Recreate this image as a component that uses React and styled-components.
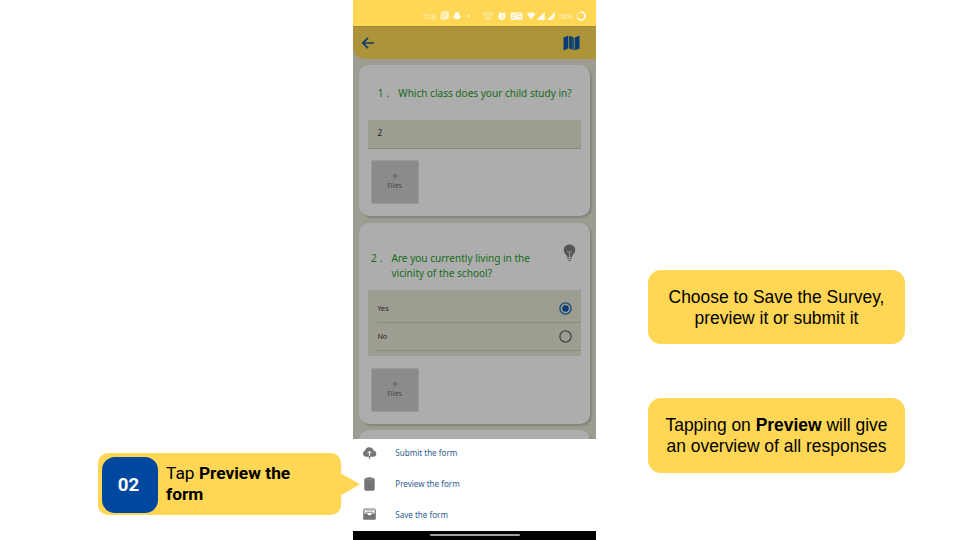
import React from "react";
import styled, { createGlobalStyle } from "styled-components";

const GlobalStyle = createGlobalStyle`
  * { box-sizing: border-box; }
  body { margin: 0; background: #fff; overflow: hidden; }
`;

const Page = styled.main`
  display: grid;
  grid-template-columns: 353px 243px 364px;
  width: 960px;
  height: 540px;
  background: #fff;
`;

const StepColumn = styled.section`
  display: flex;
  flex-direction: column;
  justify-content: flex-end;
  padding: 0 12px 25px 98px;
`;

const StepCallout = styled.div`
  position: relative;
  display: flex;
  align-items: center;
  gap: 8px;
  height: 62px;
  padding: 1px 4px 0;
  border-radius: 10px;
  background: #ffd755;
  font-family: Roboto, sans-serif;
`;

const StepNumber = styled.div`
  display: flex;
  align-items: center;
  justify-content: center;
  flex: none;
  width: 56px;
  height: 56px;
  padding: 1px 3px 0 0;
  border-radius: 13px;
  background: #00489f;
  color: #fff;
  font-size: 18.7px;
  font-weight: 700;
`;

const StepText = styled.div`
  display: flex;
  flex-direction: column;
  padding-bottom: 2px;
  color: #000;
  font-size: 17.35px;
  line-height: 21px;
  white-space: nowrap;
`;

const Pointer = styled.svg`
  position: absolute;
  z-index: 2;
  left: 242px;
  top: 20px;
  width: 20px;
  height: 23px;
`;

const Phone = styled.section`
  display: flex;
  flex-direction: column;
  height: 540px;
  overflow: hidden;
  background: #9d9d92;
  font-family: "Noto Sans", sans-serif;
`;

const StatusBar = styled.div`
  display: flex;
  align-items: center;
  flex: none;
  height: 26px;
  padding: 6px 10px 0 70px;
  background: #ffd755;
  color: #fff3c8;
  font-size: 7.5px;
  line-height: 10px;
`;

const StatusTime = styled.span`
  width: 17px;
  letter-spacing: -0.5px;
  white-space: nowrap;
`;

const StatusIcons = styled.svg`
  flex: none;
  width: 119px;
  height: 12px;
`;

const Battery = styled.span`
  width: 17px;
  letter-spacing: -0.3px;
  white-space: nowrap;
`;

const BatteryRing = styled.svg`
  width: 10px;
  height: 10px;
`;

const AppBar = styled.header`
  display: flex;
  align-items: center;
  justify-content: space-between;
  flex: none;
  height: 33px;
  padding: 0 16px 0 8px;
  border-top: 1px solid #9f8836;
  border-bottom-left-radius: 12px;
  background: #ad9439;
`;

const Icon = styled.svg`
  display: block;
  flex: none;
  width: ${(p) => p.$w}px;
  height: ${(p) => p.$h}px;
`;

const Cards = styled.div`
  display: flex;
  flex-direction: column;
  gap: 6.5px;
  flex: 1;
  min-height: 0;
  overflow: hidden;
  padding: 6px 6px 0 6px;
`;

const Card = styled.article`
  flex: none;
  height: ${(p) => p.$height}px;
  padding: ${(p) => p.$top}px 9px 0;
  border-radius: 10px;
  background: #adadad;
  box-shadow: 2px 2px 2px #85857c;
`;

const Question = styled.div`
  display: flex;
  align-items: flex-start;
  padding-left: ${(p) => p.$indent}px;
  color: #146b18;
  font-size: 10.05px;
  line-height: 14.4px;
  white-space: nowrap;
`;

const QuestionNumber = styled.span`
  width: 20.5px;
  word-spacing: 0.5px;
`;

const QuestionText = styled.span`
  flex: 1;
`;

const Hint = styled(Icon)`
  margin: -7px 5px 0 0;
`;

const Field = styled.div`
  height: 29px;
  margin-top: ${(p) => p.$gap}px;
  padding: 7.4px 9.5px;
  border-bottom: 1px solid #87877f;
  background: #9d9d92;
  color: #202020;
  font-size: 8.2px;
  line-height: 11px;
`;

const Options = styled.div`
  height: 66px;
  margin-top: 10px;
  padding: 4.4px 0 0 9.4px;
  background: #9d9d92;
`;

const Option = styled.div`
  display: flex;
  align-items: center;
  justify-content: space-between;
  height: 28.3px;
  padding-right: 9px;
  border-bottom: 1px solid #8b8b82;
  color: #252525;
  font-size: 7.2px;
`;

const FileButton = styled.div`
  display: flex;
  flex-direction: column;
  align-items: center;
  justify-content: center;
  gap: 1px;
  width: 48px;
  height: 44px;
  margin: 11.5px 0 0 2.5px;
  padding-bottom: 1px;
  border: 1px solid #999;
  border-radius: 2px;
  background: #8b8b8b;
  color: #4a4a4a;
  font-size: 7.1px;
  line-height: 10px;
`;

const ActionSheet = styled.nav`
  display: flex;
  flex-direction: column;
  flex: none;
  height: 92px;
  background: #fff;
`;

const Action = styled.div`
  display: flex;
  align-items: center;
  height: 30.7px;
  padding: 0 0 2px 9px;
  color: #2c6090;
  font-size: 8.05px;
  white-space: nowrap;
`;

const ActionIcon = styled.span`
  display: flex;
  justify-content: center;
  width: 15px;
  margin-right: 18.3px;
`;

const SystemBar = styled.div`
  display: flex;
  justify-content: center;
  align-items: flex-start;
  flex: none;
  height: 9.4px;
  padding-top: 3.4px;
  background: #000;
`;

const HomeHandle = styled.span`
  width: 90px;
  height: 2px;
  border-radius: 1px;
  background: #a0a0a0;
`;

const NotesColumn = styled.aside`
  display: flex;
  flex-direction: column;
  gap: 54px;
  padding: 270px 55px 0 52px;
`;

const Note = styled.p`
  display: flex;
  align-items: center;
  justify-content: center;
  height: 74.4px;
  margin: 0;
  padding-top: 1px;
  border-radius: 13px;
  background: #ffd755;
  color: #000;
  font-family: "Liberation Sans", Arial, sans-serif;
  font-size: 17.45px;
  line-height: 21px;
  text-align: center;
  white-space: nowrap;
`;

function Radio({ checked }) {
  return (
    <Icon $w={13} $h={13} viewBox="0 0 13 13">
      <circle cx="6.5" cy="6.5" r="5.6" fill="none" stroke={checked ? "#17477a" : "#424240"} strokeWidth="1.3" />
      {checked && <circle cx="6.5" cy="6.5" r="3.2" fill="#033c79" />}
    </Icon>
  );
}

function Files() {
  return (
    <FileButton>
      <Icon $w={6} $h={6} viewBox="0 0 6 6">
        <path d="M3 .5v5M.5 3h5" stroke="#555" strokeWidth=".8" />
      </Icon>
      <span>Files</span>
    </FileButton>
  );
}

function StatusBarIcons() {
  return (
    <StatusIcons viewBox="440 10 119 12" fill="#fffaf0">
      <path d="M442 12h6.2v6.2H442z" fill="#fff1bd" stroke="#fff8e0" strokeWidth="1" />
      <path d="M443.6 14h3M443.6 16h1.6" fill="none" stroke="#ffd755" strokeWidth=".9" />
      <path d="M440.9 14v5.4h5.6" fill="none" stroke="#fff1bd" strokeWidth="1" />
      <path d="M457 12c2 0 2.6 1.5 2.5 3l1.2 1.8c.6.6 0 1-.8 1.1-.6 1-1.2.9-1.8.9-.5.8-1.7.8-2.2 0-.6 0-1.2.1-1.8-.9-.8-.1-1.4-.5-.8-1.1l1.2-1.8c-.1-1.5.5-3 2.5-3z" />
      <circle cx="469" cy="16" r="1.1" />
      <g fill="none" stroke="#fff1bd" strokeWidth=".8">
        <circle cx="484.3" cy="14" r="1.4" /><circle cx="488" cy="14" r="1.4" /><circle cx="491.7" cy="14" r="1.4" />
        <path d="M484.5 17.3h7M485 19h6" />
      </g>
      <circle cx="502" cy="16.3" r="3.6" />
      <path d="M498.3 14l2-1.8M505.7 14l-2-1.8" stroke="#fffaf0" strokeWidth="1" />
      <path d="M502 14.5v2.2l1.5.8" fill="none" stroke="#ffd755" strokeWidth=".8" />
      <rect x="510.5" y="12.4" width="12" height="7.4" rx="1" />
      <path d="M512 15h4M512 17.5h3M517 14.2h4M517.5 17h1.5l1-1 1 2" fill="none" stroke="#ffd755" strokeWidth=".8" />
      <path d="M526.8 14q4.4-3.4 8.8 0l-4.4 5.4z" />
      <path d="M536.5 20l8.2-8.2V20z M547 20l8-8v4l-3.8 4z" />
      <path d="M552.5 18l2 2m0-2l-2 2" stroke="#fff3c8" strokeWidth=".7" />
    </StatusIcons>
  );
}

export default function App() {
  return (
    <>
      <GlobalStyle />
      <Page>
        <StepColumn>
          <StepCallout>
            <StepNumber>02</StepNumber>
            <StepText>
              <span>Tap <b>Preview the</b></span>
              <b>form</b>
            </StepText>
            <Pointer viewBox="0 0 20 23"><path d="M0 0l20 11.3L0 23z" fill="#ffd755" /></Pointer>
          </StepCallout>
        </StepColumn>

        <Phone>
          <StatusBar>
            <StatusTime>5:16</StatusTime>
            <StatusBarIcons />
            <Battery>56%</Battery>
            <BatteryRing viewBox="0 0 10 10">
              <circle cx="5" cy="5" r="4" fill="none" stroke="#ffecb0" strokeWidth="1.2" />
              <path d="M5 1a4 4 0 1 1-3.5 6" fill="none" stroke="#fff" strokeWidth="1.4" />
            </BatteryRing>
          </StatusBar>
          <AppBar>
            <Icon $w={14} $h={14} viewBox="0 0 14 14">
              <path d="M13 7H2M7 1.8L1.8 7 7 12.2" fill="none" stroke="#083b70" strokeWidth="1.7" />
            </Icon>
            <Icon $w={17} $h={16} viewBox="0 0 17 16">
              <path d="M.5 2.6L5 .8v12.8L.5 15.4z M12 2.4L16.5.6v12.8L12 15.2z" fill="#043a78" />
              <path d="M5.6 .8l5.8 1.7v12.7l-5.8-1.7z" fill="#24506c" />
              <path d="M7.7 1.4v12.7" stroke="#073a75" strokeWidth="1.5" />
            </Icon>
          </AppBar>
          <Cards>
            <Card $height={151} $top={20.5}>
              <Question $indent={9.8}>
                <QuestionNumber>1 .</QuestionNumber>
                <QuestionText>Which class does your child study in?</QuestionText>
              </Question>
              <Field $gap={20}>2</Field>
              <Files />
            </Card>
            <Card $height={201} $top={28.7}>
              <Question $indent={3}>
                <QuestionNumber>2 .</QuestionNumber>
                <QuestionText>Are you currently living in the<br />vicinity of the school?</QuestionText>
                <Hint $w={13} $h={18} viewBox="0 0 13 18">
                  <path d="M6.5.5C3 .5.8 2.9.8 5.9c0 2.5 1.5 3.7 2.5 5.1.5.8.5 2 .9 2.3h4.6c.4-.3.4-1.5.9-2.3 1-1.4 2.5-2.6 2.5-5.1 0-3-2.2-5.4-5.7-5.4z" fill="#555" />
                  <path d="M4 7.2l2.5 1.2L9 7.2M6.5 8.5v4.7" fill="none" stroke="#a0a0a0" strokeWidth=".9" />
                  <path d="M4.3 14.5h4.4M4.9 16.5h3.2" stroke="#656565" strokeWidth="1.2" />
                </Hint>
              </Question>
              <Options>
                <Option>Yes<Radio checked /></Option>
                <Option>No<Radio /></Option>
              </Options>
              <Files />
            </Card>
            <Card $height={40} $top={0} />
          </Cards>
          <ActionSheet>
            <Action>
              <ActionIcon>
                <Icon $w={15} $h={12} viewBox="0 0 15 12">
                  <path d="M3.5 9.7A3.2 3.2 0 0 1 3 3.6a4.4 4.4 0 0 1 8.5-.2A3.2 3.2 0 0 1 11.8 9.7z" fill="#747474" />
                  <path d="M7.5 9V4.5M5.5 6.2l2-2 2 2" fill="none" stroke="#fff" strokeWidth="1" />
                  <path d="M7.5 8.8v3" stroke="#747474" strokeWidth="1.2" />
                </Icon>
              </ActionIcon>
              Submit the form
            </Action>
            <Action>
              <ActionIcon>
                <Icon $w={11} $h={14} viewBox="0 0 11 14">
                  <rect x=".3" y="1" width="10.4" height="12.7" rx="1.7" fill="#747474" />
                  <rect x="2.8" y=".2" width="5.4" height="2.7" rx="1" fill="#747474" stroke="#aaa" strokeWidth=".5" />
                </Icon>
              </ActionIcon>
              Preview the form
            </Action>
            <Action>
              <ActionIcon>
                <Icon $w={13} $h={12} viewBox="0 0 13 12">
                  <path d="M.8 6V2.2Q.8 1 2 1h9q1.2 0 1.2 1.2V6" fill="#fff" stroke="#747474" strokeWidth="1.2" />
                  <path d="M3 2.8h7M2.5 4.5h8" stroke="#858585" strokeWidth=".8" />
                  <path d="M.2 5.4h4.2c.2 2.5 4 2.5 4.2 0h4.2v5c0 .8-.4 1.3-1.2 1.3H1.4c-.8 0-1.2-.5-1.2-1.3z" fill="#747474" />
                </Icon>
              </ActionIcon>
              Save the form
            </Action>
          </ActionSheet>
          <SystemBar><HomeHandle /></SystemBar>
        </Phone>

        <NotesColumn>
          <Note><span>Choose to Save the Survey,<br />preview it or submit it</span></Note>
          <Note><span>Tapping on <b>Preview</b> will give<br />an overview of all responses</span></Note>
        </NotesColumn>
      </Page>
    </>
  );
}
